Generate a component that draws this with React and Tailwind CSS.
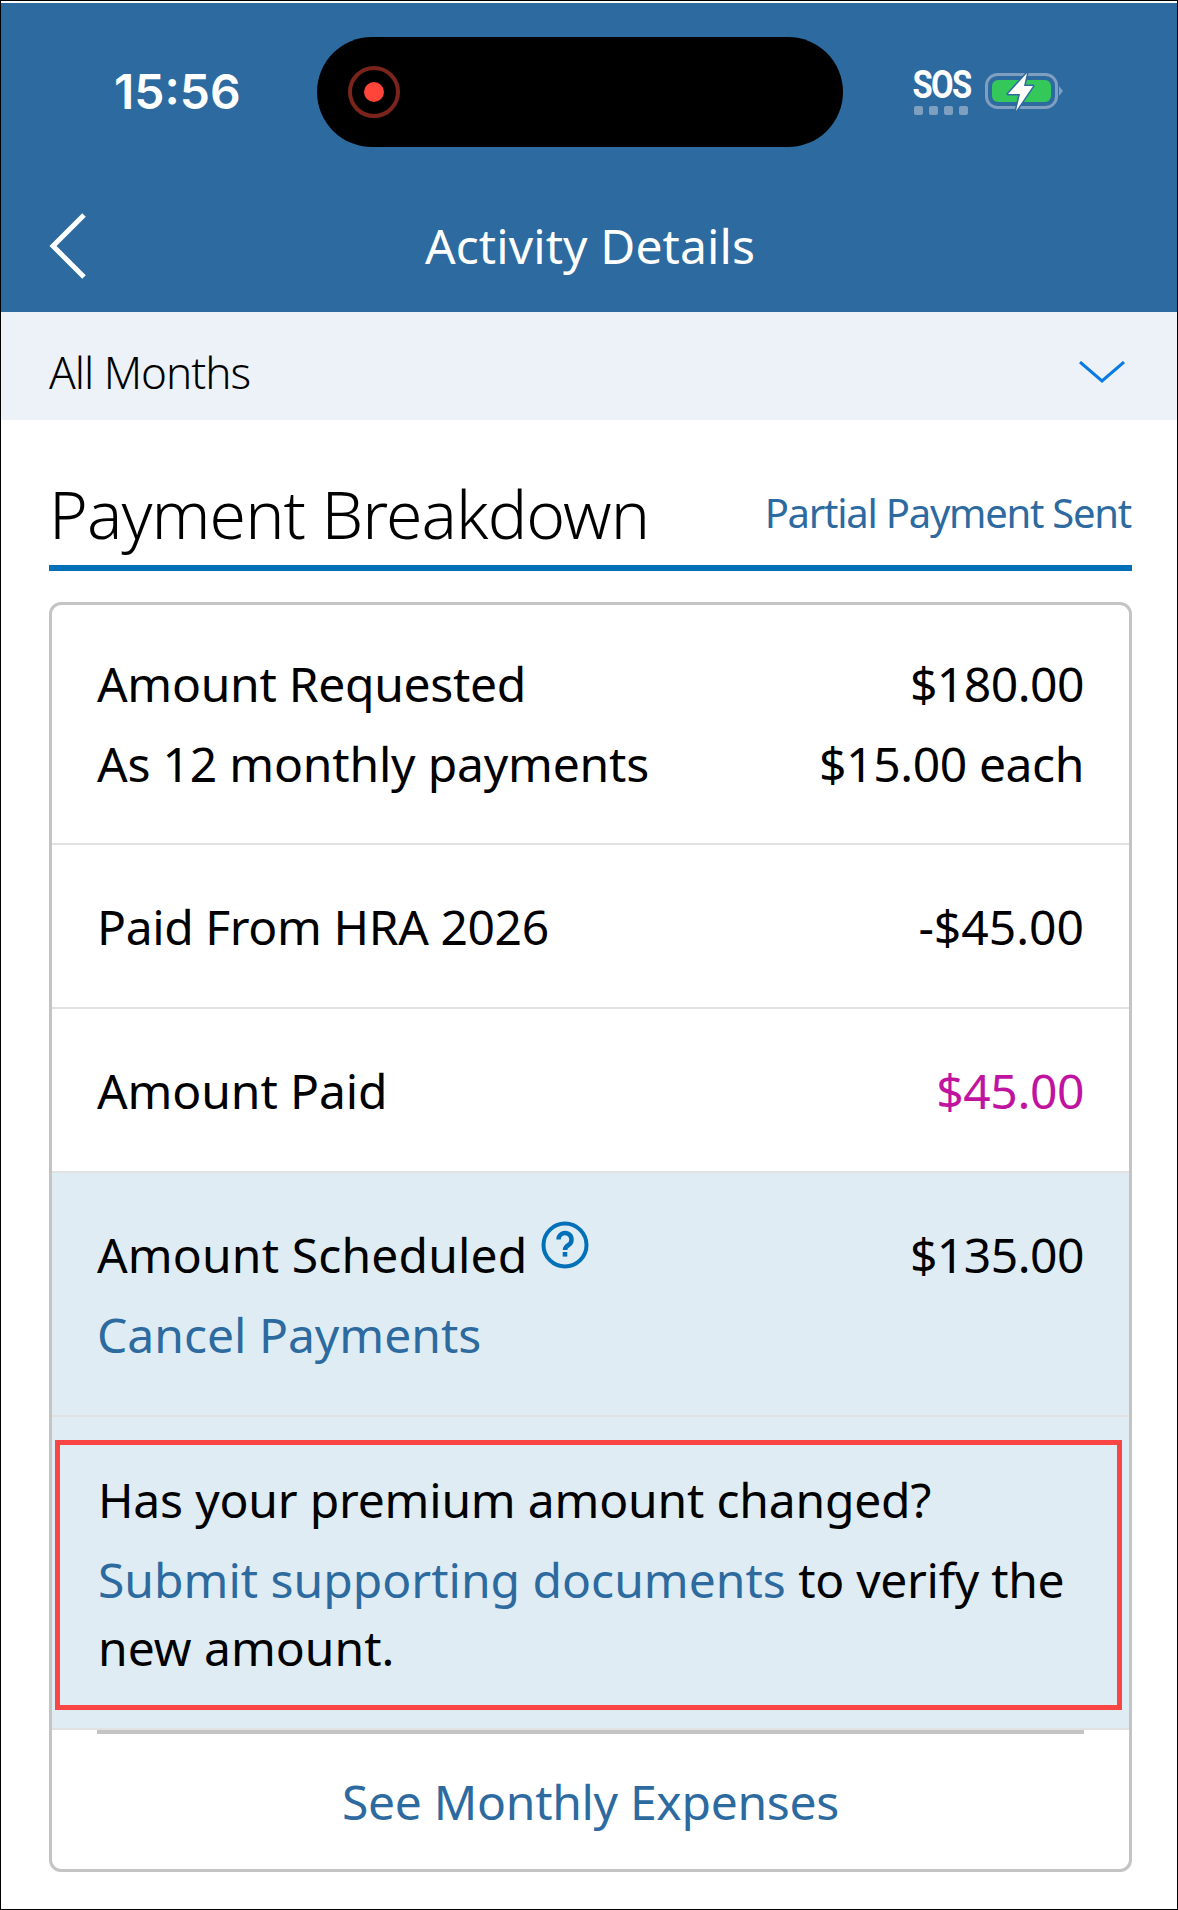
import React from 'react';

const FONT = 'font-["Noto_Sans",sans-serif]';

function Row({ className = '', children }) {
  return <div className={`flex justify-between border-b-2 border-[#e2e2e2] pl-[45px] pr-[45px] ${className}`}>{children}</div>;
}

function BatteryIcon() {
  return (
    <svg width="82" height="42" viewBox="0 0 82 42">
      <rect x="3.5" y="3.5" width="70" height="33" rx="11" fill="none" stroke="#7f9fc0" strokeWidth="3" />
      <rect x="9" y="9" width="59" height="22" rx="6" fill="#34c759" />
      <path d="M76 15 L80 20 L76 25 Z" fill="#7f9fc0" />
      <path d="M44 2 L25 23 L37 23 L33 40 L50 15 L41 15 Z" fill="#fff" stroke="#2c6a9f" strokeWidth="3" paintOrder="stroke" strokeLinejoin="round" />
    </svg>
  );
}

export default function App() {
  return (
    <div className={`${FONT} w-[1178px] h-[1910px] bg-white text-black border border-black overflow-hidden box-border text-[48px]`}>
      <header className="bg-[#2c6a9f] mt-[2px] h-[309px] flex flex-col">
        <div className="flex items-center h-[176px] pt-[1px]">
          <div className="w-[316px] pl-[113px] font-['Inter',sans-serif] font-semibold text-[48px] text-white">15:56</div>
          <div className="w-[526px] h-[110px] bg-black rounded-full flex items-center pl-[31px]">
            <div className="w-[52px] h-[52px] rounded-full border-[4px] border-[#7a241c] flex items-center justify-center">
              <div className="w-[20px] h-[20px] rounded-full bg-[#ff453a]" />
            </div>
          </div>
          <div className="flex items-center pl-[69px] gap-[13px]">
            <div className="flex flex-col items-center w-[58px]">
              <span className="font-['Roboto',sans-serif] font-bold text-[39px] leading-[34px] tracking-[-2px] scale-x-[0.84] text-white">SOS</span>
              <div className="flex gap-[6px] mt-[4px]">
                <span className="w-[9px] h-[9px] rounded-[2px] bg-[#7f9fc0]" />
                <span className="w-[9px] h-[9px] rounded-[2px] bg-[#7f9fc0]" />
                <span className="w-[9px] h-[9px] rounded-[2px] bg-[#7f9fc0]" />
                <span className="w-[9px] h-[9px] rounded-[2px] bg-[#7f9fc0]" />
              </div>
            </div>
            <BatteryIcon />
          </div>
        </div>
        <div className="relative flex-1 flex items-center justify-center">
          <svg width="40" height="68" viewBox="0 0 40 68" className="absolute left-[47px] top-[33px]">
            <path d="M36 3 L5 34 L36 65" fill="none" stroke="#fff" strokeWidth="5" />
          </svg>
          <span className="text-white text-[48px] font-normal tracking-[0.1px] ml-[2px]">Activity Details</span>
        </div>
      </header>

      <div className="h-[108px] bg-[#edf2f9] flex items-center justify-between pl-[48px] pr-[52px] pt-[12px]">
        <span className="text-[44px] font-light tracking-[-1px]">All Months</span>
        <svg width="46" height="22" viewBox="0 0 46 22">
          <path d="M1 1 L23 20 L45 1" fill="none" stroke="#0a7be0" strokeWidth="3" />
        </svg>
      </div>

      <div className="pl-[48px] pr-[45px]">
        <div className="flex items-end justify-between h-[151px] border-b-[6px] border-[#0071b9]">
          <span className="text-[66px] font-light tracking-[-0.9px] leading-[90px] mb-[7px]">Payment Breakdown</span>
          <span className="text-[40px] text-[#2c6a9f] tracking-[-1.25px] leading-[60px] mb-[22px] mr-[1px]">Partial Payment Sent</span>
        </div>

        <div className="mt-[31px] h-[1270px] border-[3px] border-[#c4c4c4] rounded-[12px] overflow-hidden flex flex-col">
          <Row className="h-[240px] items-center">
            <div className="leading-[80px]">
              <div className="tracking-[-0.3px]">Amount Requested</div>
              <div className="tracking-[-0.2px]">As 12 monthly payments</div>
            </div>
            <div className="leading-[80px] text-right">
              <div className="tracking-[-0.5px]">$180.00</div>
              <div className="tracking-[-0.4px]">$15.00 each</div>
            </div>
          </Row>
          <Row className="h-[164px] items-center pt-[2px]">
            <span className="tracking-[-0.4px]">Paid From HRA 2026</span>
            <span>-$45.00</span>
          </Row>
          <Row className="h-[164px] items-center pt-[2px]">
            <span className="tracking-[-0.1px]">Amount Paid</span>
            <span className="text-[#c014a0] tracking-[-0.4px]">$45.00</span>
          </Row>
          <Row className="h-[244px] bg-[#dfecf3] items-center pt-[2px]">
            <div className="leading-[80px]">
              <div className="flex items-start">
                <span className="tracking-[0.15px]">Amount Scheduled</span>
                <svg width="48" height="48" viewBox="0 0 48 48" className="ml-[14px] mt-[6px]">
                  <circle cx="24" cy="24" r="21.5" fill="none" stroke="#0071b9" strokeWidth="4" />
                  <path d="M17.5 18.5 a6.5 6.5 0 1 1 10 5.5 c-2.5 1.6 -3.5 2.5 -3.5 5" fill="none" stroke="#0071b9" strokeWidth="4.5" />
                  <rect x="21.7" y="31" width="4.6" height="4.6" fill="#0071b9" />
                </svg>
              </div>
              <div className="text-[#2c6a9f]">Cancel Payments</div>
            </div>
            <div className="leading-[80px] self-center pb-[80px] tracking-[-0.5px]">$135.00</div>
          </Row>
          <div className="bg-[#dfecf3] h-[313px] border-b-2 border-[#e2e2e2] pt-[23px] pl-[3px] pr-[7px]">
            <div className="h-[270px] border-[5px] border-[#fa4545] pl-[38px] pr-[20px] pt-[15px]">
              <div className="leading-[80px] tracking-[-0.2px]">Has your premium amount changed?</div>
              <div className="leading-[68px] mt-[6px]"><span className="text-[#2c6a9f]">Submit supporting documents</span> <span className="tracking-[-0.3px]">to verify the</span> new amount.</div>
            </div>
          </div>
          <div className="ml-[45px] mr-[45px] h-[4px] bg-[#c4c4c4]" />
          <div className="flex-1 flex items-center justify-center text-[#2c6a9f] tracking-[-0.3px]">See Monthly Expenses</div>
        </div>
      </div>
    </div>
  );
}
